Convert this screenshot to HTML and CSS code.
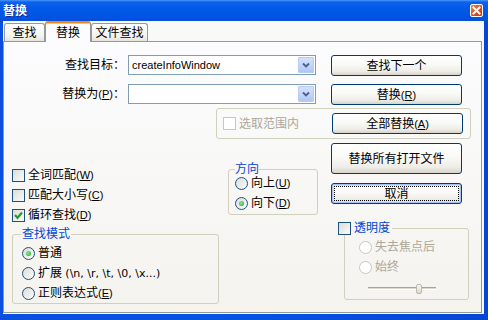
FILE: index.html
```html
<!DOCTYPE html>
<html lang="zh-CN">
<head>
  <meta charset="UTF-8" />
  <title>替换</title>
  <link rel="stylesheet" href="styles.css">
</head>
<body>

  <div class="window">
    <!-- Title bar -->
    <div class="titlebar">
      <span class="title">替换</span>
      <span class="close-btn">
        <svg width="9" height="9" viewBox="0 0 9 9"><path d="M1.5 1.5 L7.5 7.5 M7.5 1.5 L1.5 7.5" stroke="#fff" stroke-width="2" stroke-linecap="square"/></svg>
      </span>
    </div>

    <div class="client">
      <div class="tabs">
        <div class="tab">查找</div>
        <div class="tab active">替换</div>
        <div class="tab">文件查找</div>
      </div>

      <div class="panel">
        <!-- Find / replace fields -->
        <div class="find-rows">
          <div class="field-row">
            <span class="field-label">查找目标：</span>
            <div class="combo">
              <span class="combo-text">createInfoWindow</span>
              <span class="combo-drop"><svg width="8" height="6" viewBox="0 0 8 6"><path d="M1 1.5 L4 4.5 L7 1.5" fill="none" stroke="#4d6185" stroke-width="1.8"/></svg></span>
            </div>
            <button class="btn">查找下一个</button>
          </div>
          <div class="field-row">
            <span class="field-label">替换为<span class="key">(<u>P</u>)</span>：</span>
            <div class="combo">
              <span class="combo-text"></span>
              <span class="combo-drop"><svg width="8" height="6" viewBox="0 0 8 6"><path d="M1 1.5 L4 4.5 L7 1.5" fill="none" stroke="#4d6185" stroke-width="1.8"/></svg></span>
            </div>
            <button class="btn">替换<span class="key">(<u>R</u>)</span></button>
          </div>
        </div>

        <div class="scope-row">
          <span class="check disabled"></span>
          <span class="opt-text disabled-text">选取范围内</span>
          <button class="btn">全部替换<span class="key">(<u>A</u>)</span></button>
        </div>

        <div class="lower">
          <div class="lower-left">
            <div class="options-row">
              <div class="check-list">
                <div class="opt"><span class="check"></span><span class="opt-text">全词匹配<span class="key">(<u>W</u>)</span></span></div>
                <div class="opt"><span class="check"></span><span class="opt-text">匹配大小写<span class="key">(<u>C</u>)</span></span></div>
                <div class="opt">
                  <span class="check">
                    <svg width="11" height="11" viewBox="0 0 11 11"><path d="M2 5 L4.5 7.8 L9 2.5" fill="none" stroke="#21a121" stroke-width="2.2"/></svg>
                  </span>
                  <span class="opt-text">循环查找<span class="key">(<u>D</u>)</span></span>
                </div>
              </div>

              <fieldset class="group direction">
                <legend>方向</legend>
                <div class="opt radio-row"><span class="radio"></span><span class="opt-text">向上<span class="key">(<u>U</u>)</span></span></div>
                <div class="opt radio-row"><span class="radio on"></span><span class="opt-text">向下<span class="key">(<u>D</u>)</span></span></div>
              </fieldset>
            </div>

            <fieldset class="group search-mode">
              <legend>查找模式</legend>
              <div class="opt mode-row"><span class="radio on"></span><span class="opt-text">普通</span></div>
              <div class="opt mode-row"><span class="radio"></span><span class="opt-text">扩展 <span class="latin">(\n, \r, \t, \0, \x...)</span></span></div>
              <div class="opt mode-row"><span class="radio"></span><span class="opt-text">正则表达式<span class="key">(<u>E</u>)</span></span></div>
            </fieldset>
          </div>

          <div class="lower-right">
            <button class="btn tall">替换所有打开文件</button>
            <button class="btn default">取消</button>

            <fieldset class="group transparency">
              <legend><span class="check"></span><span class="opt-text">透明度</span></legend>
              <div class="opt trans-row"><span class="radio disabled"></span><span class="opt-text disabled-text">失去焦点后</span></div>
              <div class="opt trans-row"><span class="radio disabled"></span><span class="opt-text disabled-text">始终</span></div>
              <div class="slider-row">
                <div class="slider"><span class="thumb"></span></div>
              </div>
            </fieldset>
          </div>
        </div>
      </div>
    </div>
  </div>

</body>
</html>
```

FILE: styles.css
```css
* {
  box-sizing: border-box;
  margin: 0;
  padding: 0;
}

html, body {
  width: 488px;
  height: 320px;
  overflow: hidden;
  font-family: "Liberation Sans", "Noto Sans CJK SC", sans-serif;
  font-size: 12px;
  line-height: 14px;
  color: #000;
}

.window {
  width: 488px;
  height: 320px;
  display: flex;
  flex-direction: column;
  background: linear-gradient(to right, #0a4fe0, #0553e6 50%, #0746d4);
}

/* Title bar */
.titlebar {
  height: 21px;
  display: flex;
  align-items: center;
  justify-content: space-between;
  padding: 0 5px 0 3px;
  background: linear-gradient(#4a98fb 0, #0c62ec 2px, #0259e8 40%, #0054e3 80%, #0a4ed8 100%);
  color: #fff;
}

.title {
  font-weight: bold;
  font-size: 12px;
  text-shadow: 1px 1px 0 #0a2a9a;
}

.close-btn {
  width: 13px;
  height: 13px;
  display: flex;
  align-items: center;
  justify-content: center;
  border: 1px solid #fff;
  border-radius: 2px;
  background: linear-gradient(135deg, #f08a64, #d9502a 50%, #c23c18);
}

.client {
  flex: 1;
  margin: 0 4px 6px 3px;
  padding: 0 2px 1px 0;
  background: #f9f9f8;
  display: flex;
  flex-direction: column;
}

/* Tabs */
.tabs {
  height: 21px;
  display: flex;
  align-items: flex-end;
  padding-left: 1px;
  border-bottom: 1px solid #919b9c;
}

.tab {
  height: 18px;
  display: flex;
  align-items: center;
  justify-content: center;
  border: 1px solid #919b9c;
  border-bottom: none;
  border-radius: 3px 3px 0 0;
  background: linear-gradient(#fff, #f3f3ef 70%, #e6e4dc);
}

.tab:nth-child(1) { width: 41px; }
.tab:nth-child(2) { width: 46px; }
.tab:nth-child(3) { width: 57px; }

.tab.active {
  height: 21px;
  margin-bottom: -1px;
  padding-top: 1px;
  border-top: 2px solid #e68b2c;
  box-shadow: inset 0 1px 0 #ffc73c;
  background: #fcfcfe;
}

.panel {
  flex: 1;
  border: 1px solid #919b9c;
  border-top: none;
  background: linear-gradient(#fcfcfe, #f4f3ee);
}

/* Shared controls */
.key {
  font-size: 11px;
}

.latin {
  font-family: "DejaVu Sans", sans-serif;
  font-size: 11px;
}

.btn {
  font: inherit;
  color: #000;
  width: 131px;
  height: 21px;
  display: flex;
  align-items: center;
  justify-content: center;
  border: 1px solid #003c74;
  border-radius: 3px;
  background: linear-gradient(#fff 0%, #f9f9f7 45%, #eeede7 80%, #d8d3c8 100%);
}

.btn.tall {
  height: 31px;
}

.btn.default {
  margin-top: 9px;
  box-shadow: inset 0 0 0 1px #a9c3f5, inset 0 0 0 2px #d3e0fb;
  outline: 1px dotted #000;
  outline-offset: -4px;
}

.opt {
  display: flex;
  align-items: center;
}

.opt-text {
  margin-left: 3px;
  white-space: nowrap;
}

.disabled-text {
  color: #aca899;
}

.check {
  width: 13px;
  height: 13px;
  flex: none;
  display: flex;
  align-items: center;
  justify-content: center;
  border: 1px solid #1c5180;
  background: linear-gradient(135deg, #dcdcd7, #fbfbf9);
}

.check.disabled {
  border-color: #cac8bb;
  background: #fff;
}

.radio {
  width: 13px;
  height: 13px;
  flex: none;
  display: flex;
  align-items: center;
  justify-content: center;
  border: 1px solid #1c5180;
  border-radius: 50%;
  background: linear-gradient(135deg, #dcdcd7, #fbfbf9);
}

.radio.on::after {
  content: "";
  width: 5px;
  height: 5px;
  border-radius: 50%;
  background: radial-gradient(circle at 40% 40%, #8fe89a, #21a121);
}

.radio.disabled {
  border-color: #cac8bb;
  background: #fff;
}

.group {
  min-width: 0;
  border: 1px solid #d0d0bf;
  border-radius: 3px;
}

.group legend {
  color: #0046d5;
  line-height: 12px;
  padding: 0 1px;
}

/* Find / replace rows */
.find-rows {
  padding-top: 13px;
  display: flex;
  flex-direction: column;
  gap: 8px;
}

.field-row {
  display: flex;
  align-items: flex-start;
}

.field-label {
  width: 121px;
  height: 20px;
  line-height: 20px;
  margin-right: 3px;
  text-align: right;
  white-space: nowrap;
}

.combo {
  width: 188px;
  height: 20px;
  display: flex;
  align-items: center;
  padding: 1px;
  border: 1px solid #7f9db9;
  background: #fff;
}

.combo-text {
  flex: 1;
  padding-left: 2px;
  font-size: 11px;
}

.combo-drop {
  width: 16px;
  height: 16px;
  display: flex;
  align-items: center;
  justify-content: center;
  border: 1px solid #b8cbf5;
  border-radius: 1px;
  background: linear-gradient(#d4e0fd, #c0d2fa 60%, #b0c6f6);
}

.field-row .btn {
  margin-left: 15px;
}

.scope-row {
  width: 255px;
  margin: 3px 0 0 212px;
  padding: 4px 7px 4px 6px;
  display: flex;
  align-items: center;
  border: 1px solid #d0d0bf;
  border-radius: 3px;
}

.scope-row .btn {
  margin-left: auto;
}

/* Lower area */
.lower {
  display: flex;
}

.lower-left {
  width: 314px;
}

.options-row {
  height: 89px;
  display: flex;
}

.check-list {
  margin: 26px 0 0 8px;
  display: flex;
  flex-direction: column;
}

.check-list .opt {
  height: 20px;
}

.direction {
  width: 90px;
  height: 52px;
  margin: 24px 0 0 auto;
  padding: 0 0 3px 6px;
  display: flex;
  flex-direction: column;
  gap: 4px;
}

.direction legend {
  padding: 0;
}

.radio-row {
  height: 16px;
}

.search-mode {
  width: 207px;
  margin-left: 8px;
  padding: 3px 0 0 9px;
}

.search-mode legend {
  margin-left: -1px;
}

.mode-row {
  height: 20px;
}

.lower-right {
  width: 139px;
  margin-left: 13px;
  padding-top: 4px;
  display: flex;
  flex-direction: column;
}

.transparency {
  width: 125px;
  margin: 18px 0 0 13px;
  padding: 3px 0 1px 14px;
}

.transparency legend {
  display: flex;
  align-items: center;
  margin-left: -21px;
  padding: 0 2px 0 0;
  line-height: 13px;
}

.trans-row {
  height: 18px;
  margin-bottom: 2px;
}

.slider-row {
  height: 20px;
  display: flex;
  align-items: center;
  padding-left: 9px;
}

.slider {
  position: relative;
  width: 68px;
  height: 3px;
  border-top: 1px solid #a8a597;
  border-bottom: 1px solid #fff;
  background: #dcdad0;
}

.thumb {
  position: absolute;
  left: 48px;
  top: -4px;
  width: 6px;
  height: 10px;
  border: 1px solid #bdbaad;
  border-radius: 2px;
  background: linear-gradient(#f7f7f4, #d9d7cc);
}
```
